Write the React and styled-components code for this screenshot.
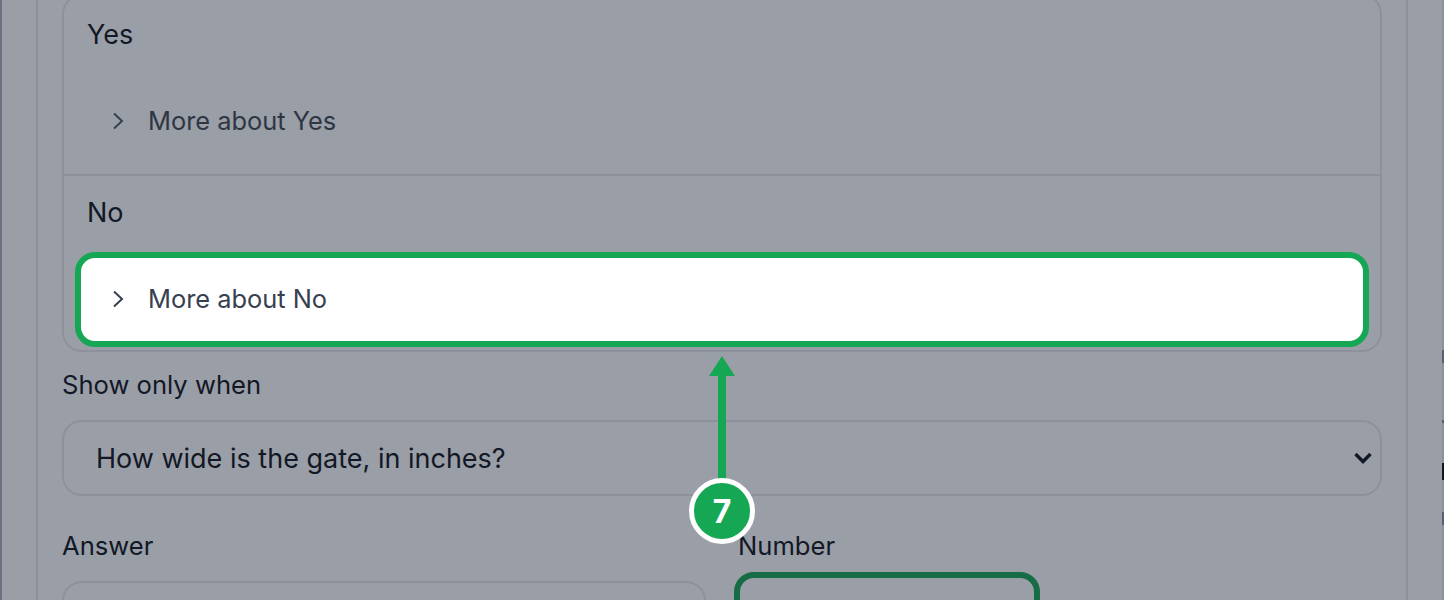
import React from 'react'
import styled, { createGlobalStyle } from 'styled-components'

const GlobalStyle = createGlobalStyle`
  html, body {
    margin: 0;
    height: 600px;
    overflow: hidden;
    background: #9a9ea7;
    font-family: Inter, "Noto Sans", sans-serif;
    color: #121826;
  }
  * {
    box-sizing: border-box;
  }
`

const green = '#16a755'
const line = '#8e919c'

const RowChevron = () => (
  <Chevron viewBox="0 0 12 18">
    <path d="M2 1.5 L10 9 L2 16.5" />
  </Chevron>
)

const App = () => (
  <>
    <GlobalStyle />
    <Page>
      <Panel>
        <OptionGroup>
          <Option>
            <OptionName>Yes</OptionName>
            <MoreRow>
              <RowChevron />
              More about Yes
            </MoreRow>
          </Option>
          <Option>
            <OptionName>No</OptionName>
            <MoreRow $active>
              <RowChevron />
              More about No
            </MoreRow>
          </Option>
        </OptionGroup>

        <Label>Show only when</Label>
        <Select>
          How wide is the gate, in inches?
          <SelectChevron viewBox="0 0 20 14">
            <path d="M2.5 3 L10 10.5 L17.5 3" />
          </SelectChevron>
        </Select>

        <Fields>
          <div>
            <FieldLabel>Answer</FieldLabel>
            <Input />
          </div>
          <div>
            <FieldLabel>Number</FieldLabel>
            <NumberInput />
          </div>
        </Fields>

        <Callout>
          <Arrow viewBox="0 0 26 126">
            <path d="M13 0 L26 20 L17 20 L17 126 L9 126 L9 20 L0 20 Z" />
          </Arrow>
          <Badge>7</Badge>
        </Callout>
      </Panel>
      <EdgeStrip>
        <EdgeMark />
        <EdgeMark $on />
        <EdgeMark />
        <EdgeMark $on />
        <EdgeMark />
        <EdgeMark $dark />
        <EdgeMark />
        <EdgeMark $on />
      </EdgeStrip>
    </Page>
  </>
)

const Page = styled.div`
  display: flex;
  height: 600px;
  overflow: hidden;
  border-left: 2px solid #6c7080;
  padding-left: 34px;
`
const Panel = styled.div`
  position: relative;
  width: 1372px;
  height: 700px;
  flex: none;
  margin-top: -6px;
  padding: 0 24px;
  border-left: 2px solid ${line};
  border-right: 2px solid ${line};
`
const OptionGroup = styled.div`
  border: 2px solid ${line};
  border-radius: 20px;
`
const Option = styled.div`
  padding: 24px 11px 5px;
  & + & {
    border-top: 2px solid ${line};
    padding-top: 22px;
    padding-bottom: 3px;
  }
`
const OptionName = styled.div`
  padding-left: 12px;
  font-size: 27px;
  line-height: 30px;
`
const MoreRow = styled.div`
  display: flex;
  align-items: center;
  gap: 24px;
  height: 95px;
  margin-top: 24px;
  padding: 0 0 2px 31px;
  font-size: 25.4px;
  color: ${p => (p.$active ? '#374050' : '#2f3643')};
  border: 6px solid ${p => (p.$active ? green : 'transparent')};
  border-radius: 20px;
  background: ${p => (p.$active ? '#fff' : 'transparent')};
`
const Chevron = styled.svg`
  width: 12px;
  height: 18px;
  flex: none;
  fill: none;
  stroke: #374050;
  stroke-width: 2;
`
const Label = styled.div`
  margin-top: 18px;
  font-size: 25.6px;
  line-height: 30px;
`
const Select = styled.div`
  display: flex;
  align-items: center;
  justify-content: space-between;
  height: 76px;
  margin-top: 20px;
  padding: 0 7px 0 32px;
  font-size: 27px;
  border: 2px solid ${line};
  border-radius: 20px;
`
const SelectChevron = styled.svg`
  width: 20px;
  height: 14px;
  flex: none;
  fill: none;
  stroke: #121826;
  stroke-width: 3.4;
`
const Fields = styled.div`
  display: grid;
  grid-template-columns: 644px 644px;
  gap: 32px;
  margin-top: 35px;
`
const FieldLabel = styled(Label)`
  margin-top: 0;
`
const Input = styled.div`
  height: 76px;
  margin-top: 20px;
  border: 2px solid ${line};
  border-radius: 20px;
`
const NumberInput = styled.div`
  width: 306px;
  height: 76px;
  margin: 11px 0 0 -4px;
  border: 6px solid #166c45;
  border-radius: 20px;
`
const Callout = styled.div`
  position: absolute;
  left: 651px;
  top: 362px;
  width: 66px;
  display: flex;
  flex-direction: column;
  align-items: center;
`
const Arrow = styled.svg`
  width: 26px;
  height: 126px;
  fill: ${green};
`
const Badge = styled.div`
  display: flex;
  align-items: center;
  justify-content: center;
  width: 66px;
  height: 66px;
  margin-top: -4px;
  border: 5px solid #fff;
  border-radius: 50%;
  background: ${green};
  color: #fff;
  font-size: 32px;
  font-weight: 700;
`
const EdgeStrip = styled.div`
  display: grid;
  grid-template-rows: 350px 13px 57px 3px 40px 17px 32px 13px 1fr;
  width: 2px;
  height: 600px;
  margin-left: auto;
  background: #8d909c;
`
const EdgeMark = styled.div`
  background: ${p => (p.$dark ? '#14171f' : p.$on ? '#5b6070' : 'transparent')};
`

export default App
